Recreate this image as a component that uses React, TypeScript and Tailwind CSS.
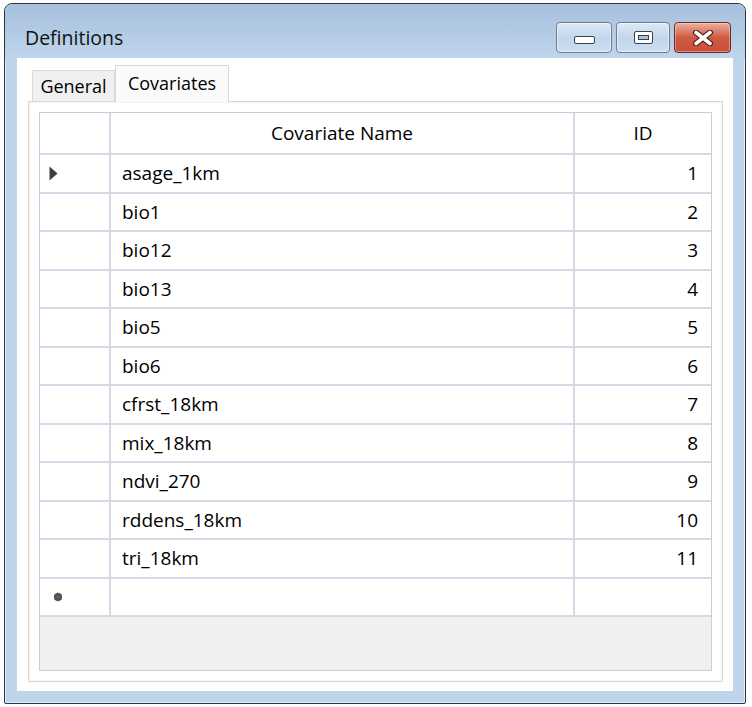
import React from "react";

const rows: [string, number][] = [
  ["asage_1km", 1],
  ["bio1", 2],
  ["bio12", 3],
  ["bio13", 4],
  ["bio5", 5],
  ["bio6", 6],
  ["cfrst_18km", 7],
  ["mix_18km", 8],
  ["ndvi_270", 9],
  ["rddens_18km", 10],
  ["tri_18km", 11],
];

const line = "border-[#d6dae6]";

function MinGlyph() {
  return (
    <svg width="21" height="8" viewBox="0 0 21 8">
      <rect x="0.5" y="0.5" width="20" height="7" rx="1.5" fill="#fff" stroke="#3a3f48" />
    </svg>
  );
}

function MaxGlyph() {
  return (
    <svg width="19" height="13" viewBox="0 0 19 13">
      <rect x="0.5" y="0.5" width="18" height="12" rx="1.5" fill="#fff" stroke="#3a3f48" />
      <rect x="4.5" y="4.5" width="10" height="4" fill="#a9bfd8" stroke="#3a3f48" />
    </svg>
  );
}

function CloseGlyph() {
  return (
    <svg width="22" height="16" viewBox="0 0 22 16">
      <path d="M4 2.5 L18 13.5 M18 2.5 L4 13.5" stroke="#4a1a14" strokeWidth="6" strokeLinecap="round" />
      <path d="M4 2.5 L18 13.5 M18 2.5 L4 13.5" stroke="#ffffff" strokeWidth="3.6" strokeLinecap="round" />
    </svg>
  );
}

export default function App() {
  return (
    <div
      className="w-[752px] h-[707px] bg-white pl-[4px] pt-[3px]"
      style={{ fontFamily: '"Segoe UI", "Open Sans", "Noto Sans", sans-serif' }}
    >
      <div className="w-[742px] h-[701px] border border-[#2d3640] rounded-t-[8px] rounded-b-[2px] bg-[#bdd4eb] flex flex-col shadow-[inset_0_0_0_1px_rgba(255,255,255,0.55)] overflow-hidden">
        {/* title bar */}
        <div className="h-[54px] shrink-0 bg-gradient-to-b from-[#a6c0dc] via-[#b3cae4] to-[#bed5ec] flex items-start justify-between pl-[20px] pr-[14px]">
          <div className="pt-[22px] text-[19.5px] leading-[24px] text-[#111]">Definitions</div>
          <div className="flex pt-[18px] gap-[4px]">
            <div className="w-[56px] h-[31px] rounded-[4px] border border-[#6b7d94] bg-gradient-to-b from-[#e0eaf6] via-[#c2d5ea] to-[#cddff2] shadow-[inset_0_0_0_1px_rgba(255,255,255,0.5)] flex items-center justify-center pt-[5px]">
              <MinGlyph />
            </div>
            <div className="w-[54px] h-[31px] rounded-[4px] border border-[#6b7d94] bg-gradient-to-b from-[#e0eaf6] via-[#c2d5ea] to-[#cddff2] shadow-[inset_0_0_0_1px_rgba(255,255,255,0.5)] flex items-center justify-center">
              <MaxGlyph />
            </div>
            <div className="w-[57px] h-[31px] rounded-[4px] border border-[#6b2a22] bg-gradient-to-b from-[#eab0a2] via-[#cf5a41] to-[#c9503a] shadow-[inset_0_0_0_1px_rgba(255,255,255,0.35)] flex items-center justify-center">
              <CloseGlyph />
            </div>
          </div>
        </div>

        {/* client area */}
        <div className="flex-1 mx-[12px] mb-[12px] bg-white flex flex-col pt-[7px] pl-[11px] pr-[10px] pb-[9px]">
          {/* tabs */}
          <div className="flex items-end h-[36px] pl-[4px] relative z-10">
            <div className="w-[83px] h-[31px] border border-b-0 border-[#d9d9d9] bg-[#f0f0f0] text-[18px] text-black flex items-center justify-center pt-[1px]">
              General
            </div>
            <div className="w-[114px] h-[37px] -mb-px border border-b-0 border-[#d9d9d9] bg-[#fafafa] text-[18px] text-black flex items-start justify-center pt-[4px]">
              Covariates
            </div>
          </div>
          {/* tab page */}
          <div className="flex-1 border border-[#d9d9d9] bg-white p-[10px] shadow-[inset_0_0_0_1px_#f4f4f4]">
            <div className="h-full border border-[#c9cede] bg-[#f1f0ef] flex flex-col text-[19px] text-black">
              <div className="grid grid-cols-[71px_464px_1fr] bg-white">
                <div className={`h-[42px] border-r-2 border-b-2 ${line}`}></div>
                <div className={`h-[42px] border-r-2 border-b-2 ${line} flex items-center justify-center`}>
                  Covariate Name
                </div>
                <div className={`h-[42px] border-b-2 ${line} flex items-center justify-center`}>ID</div>
                {rows.map(([name, id], i) => (
                  <React.Fragment key={name}>
                    <div className={`h-[38.5px] border-r-2 border-b-2 ${line} flex items-center pl-[9px]`}>
                      {i === 0 && (
                        <svg width="9" height="15" viewBox="0 0 9 15">
                          <path d="M0.5 0.5 L8.5 7.5 L0.5 14.5 Z" fill="#3e3e3e" />
                        </svg>
                      )}
                    </div>
                    <div className={`h-[38.5px] border-r-2 border-b-2 ${line} flex items-center pl-[11px]`}>
                      {name}
                    </div>
                    <div className={`h-[38.5px] border-b-2 ${line} flex items-center justify-end pr-[13px]`}>
                      {id}
                    </div>
                  </React.Fragment>
                ))}
                <div className={`h-[38.5px] border-r-2 border-b-2 ${line} flex items-center pl-[13px]`}>
                  <svg width="10" height="10" viewBox="0 0 10 10">
                    <circle cx="5" cy="5" r="4" fill="#484848" />
                    <path d="M5 0.5 V9.5 M1 2.8 L9 7.2 M9 2.8 L1 7.2" stroke="#666" strokeWidth="1" />
                  </svg>
                </div>
                <div className={`h-[38.5px] border-r-2 border-b-2 ${line}`}></div>
                <div className={`h-[38.5px] border-b-2 ${line}`}></div>
              </div>
              <div className="flex-1 bg-[#f1f0ef]"></div>
            </div>
          </div>
        </div>
      </div>
    </div>
  );
}
